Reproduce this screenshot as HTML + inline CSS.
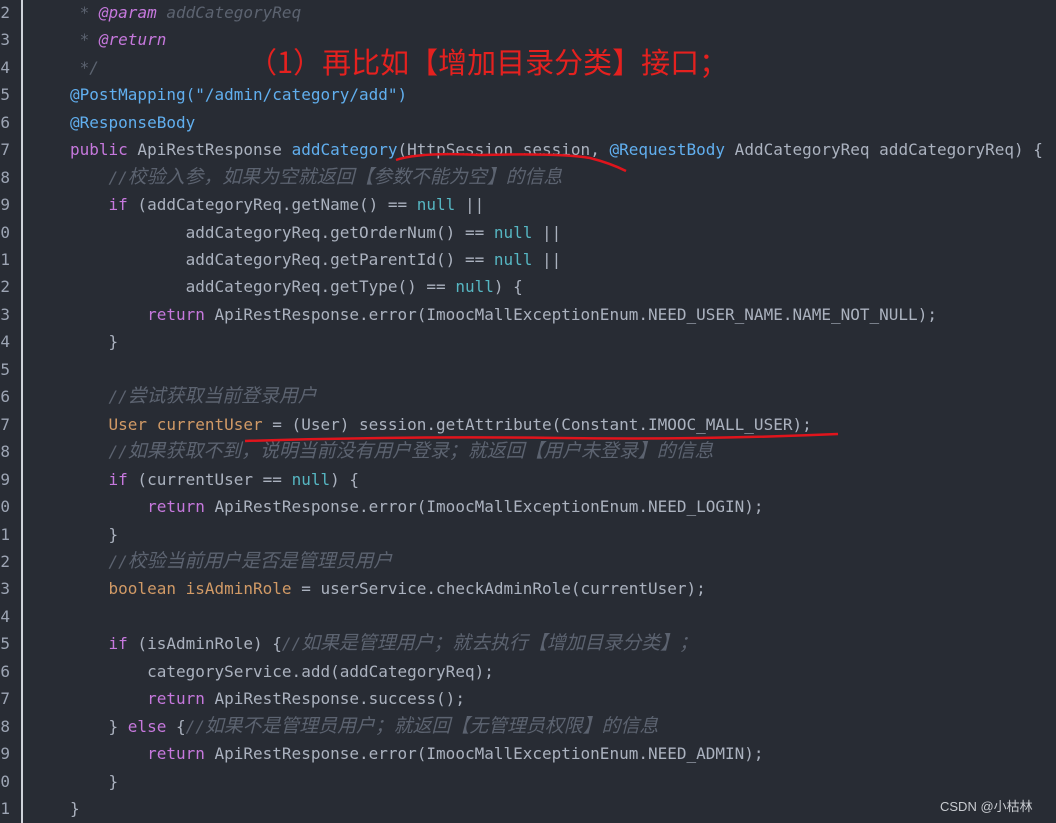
<!DOCTYPE html>
<html><head><meta charset="utf-8"><style>
body{margin:0;width:1056px;height:823px;background:#282c34;overflow:hidden;position:relative;font-family:"DejaVu Sans Mono","Noto Sans CJK SC",monospace;font-size:16px;color:#abb2bf}
.gut{position:absolute;left:21px;top:0;width:2px;height:823px;background:#cfd3da}
.l{position:absolute;left:70px;height:27px;line-height:27px;white-space:pre;margin-top:1px}
.n{position:absolute;left:-6px;width:16px;text-align:right;color:#9da5b4;height:27px;line-height:27px;margin-top:1px;font-family:"DejaVu Sans Mono",monospace}
.c{color:#5c6370;font-style:italic}
.z{font-size:18.9px;line-height:0;font-family:"Noto Sans CJK SC",sans-serif}
.k{color:#c678dd}.f{color:#61afef}.o{color:#d19a66}.nu{color:#56b6c2}
</style></head><body>
<div class="gut"></div>
<div class="n" style="top:-2px">2</div><div class="n" style="top:25px">3</div><div class="n" style="top:53px">4</div><div class="n" style="top:80px">5</div><div class="n" style="top:108px">6</div><div class="n" style="top:135px">7</div><div class="n" style="top:163px">8</div><div class="n" style="top:190px">9</div><div class="n" style="top:218px">0</div><div class="n" style="top:245px">1</div><div class="n" style="top:272px">2</div><div class="n" style="top:300px">3</div><div class="n" style="top:327px">4</div><div class="n" style="top:355px">5</div><div class="n" style="top:382px">6</div><div class="n" style="top:410px">7</div><div class="n" style="top:437px">8</div><div class="n" style="top:465px">9</div><div class="n" style="top:492px">0</div><div class="n" style="top:520px">1</div><div class="n" style="top:547px">2</div><div class="n" style="top:574px">3</div><div class="n" style="top:602px">4</div><div class="n" style="top:629px">5</div><div class="n" style="top:657px">6</div><div class="n" style="top:684px">7</div><div class="n" style="top:712px">8</div><div class="n" style="top:739px">9</div><div class="n" style="top:767px">0</div><div class="n" style="top:794px">1</div>

<div class="l c" style="top:-2px"> * <span class="k">@param</span> addCategoryReq</div>
<div class="l c" style="top:25px"> * <span class="k">@return</span></div>
<div class="l c" style="top:53px"> */</div>
<div class="l f" style="top:80px">@PostMapping("/admin/category/add")</div>
<div class="l f" style="top:108px">@ResponseBody</div>
<div class="l" style="top:135px"><span class="k">public</span> ApiRestResponse <span class="f">addCategory</span>(HttpSession session, <span class="f">@RequestBody</span> AddCategoryReq addCategoryReq) {</div>
<div class="l c" style="top:163px">    //<span class="z">校验入参，如果为空就返回【参数不能为空】的信息</span></div>
<div class="l" style="top:190px">    <span class="k">if</span> (addCategoryReq.getName() == <span class="nu">null</span> ||</div>
<div class="l" style="top:218px">            addCategoryReq.getOrderNum() == <span class="nu">null</span> ||</div>
<div class="l" style="top:245px">            addCategoryReq.getParentId() == <span class="nu">null</span> ||</div>
<div class="l" style="top:272px">            addCategoryReq.getType() == <span class="nu">null</span>) {</div>
<div class="l" style="top:300px">        <span class="k">return</span> ApiRestResponse.error(ImoocMallExceptionEnum.NEED_USER_NAME.NAME_NOT_NULL);</div>
<div class="l" style="top:327px">    }</div>
<div class="l c" style="top:382px">    //<span class="z">尝试获取当前登录用户</span></div>
<div class="l" style="top:410px">    <span class="o">User currentUser</span> = (User) session.getAttribute(Constant.IMOOC_MALL_USER);</div>
<div class="l c" style="top:437px">    //<span class="z">如果获取不到，说明当前没有用户登录；就返回【用户未登录】的信息</span></div>
<div class="l" style="top:465px">    <span class="k">if</span> (currentUser == <span class="nu">null</span>) {</div>
<div class="l" style="top:492px">        <span class="k">return</span> ApiRestResponse.error(ImoocMallExceptionEnum.NEED_LOGIN);</div>
<div class="l" style="top:520px">    }</div>
<div class="l c" style="top:547px">    //<span class="z">校验当前用户是否是管理员用户</span></div>
<div class="l" style="top:574px">    <span class="o">boolean isAdminRole</span> = userService.checkAdminRole(currentUser);</div>
<div class="l" style="top:629px">    <span class="k">if</span> (isAdminRole) {<span class="c">//<span class="z">如果是管理用户；就去执行【增加目录分类】；</span></span></div>
<div class="l" style="top:657px">        categoryService.add(addCategoryReq);</div>
<div class="l" style="top:684px">        <span class="k">return</span> ApiRestResponse.success();</div>
<div class="l" style="top:712px">    } <span class="k">else</span> {<span class="c">//<span class="z">如果不是管理员用户；就返回【无管理员权限】的信息</span></span></div>
<div class="l" style="top:739px">        <span class="k">return</span> ApiRestResponse.error(ImoocMallExceptionEnum.NEED_ADMIN);</div>
<div class="l" style="top:767px">    }</div>
<div class="l" style="top:794px">}</div>

<div style="position:absolute;left:248px;top:41px;font-family:'Noto Sans CJK SC',sans-serif;font-size:29px;line-height:40px;color:#e5211f;white-space:nowrap">（1）再比如【增加目录分类】接口；</div>
<svg style="position:absolute;left:0;top:0" width="1056" height="823">
<path d="M396 160 Q420 152 480 155 Q560 153 590 158 Q610 163 626 171" stroke="#e0141c" stroke-width="2.5" fill="none"/>
<path d="M245 441 Q400 436 560 438 Q700 440 838 434" stroke="#e0141c" stroke-width="2.5" fill="none"/>
</svg>
<div style="position:absolute;left:940px;top:796px;font-family:'Liberation Sans','Noto Sans CJK SC',sans-serif;font-size:13px;color:#c8cbd0">CSDN @小枯林</div>
</body></html>
